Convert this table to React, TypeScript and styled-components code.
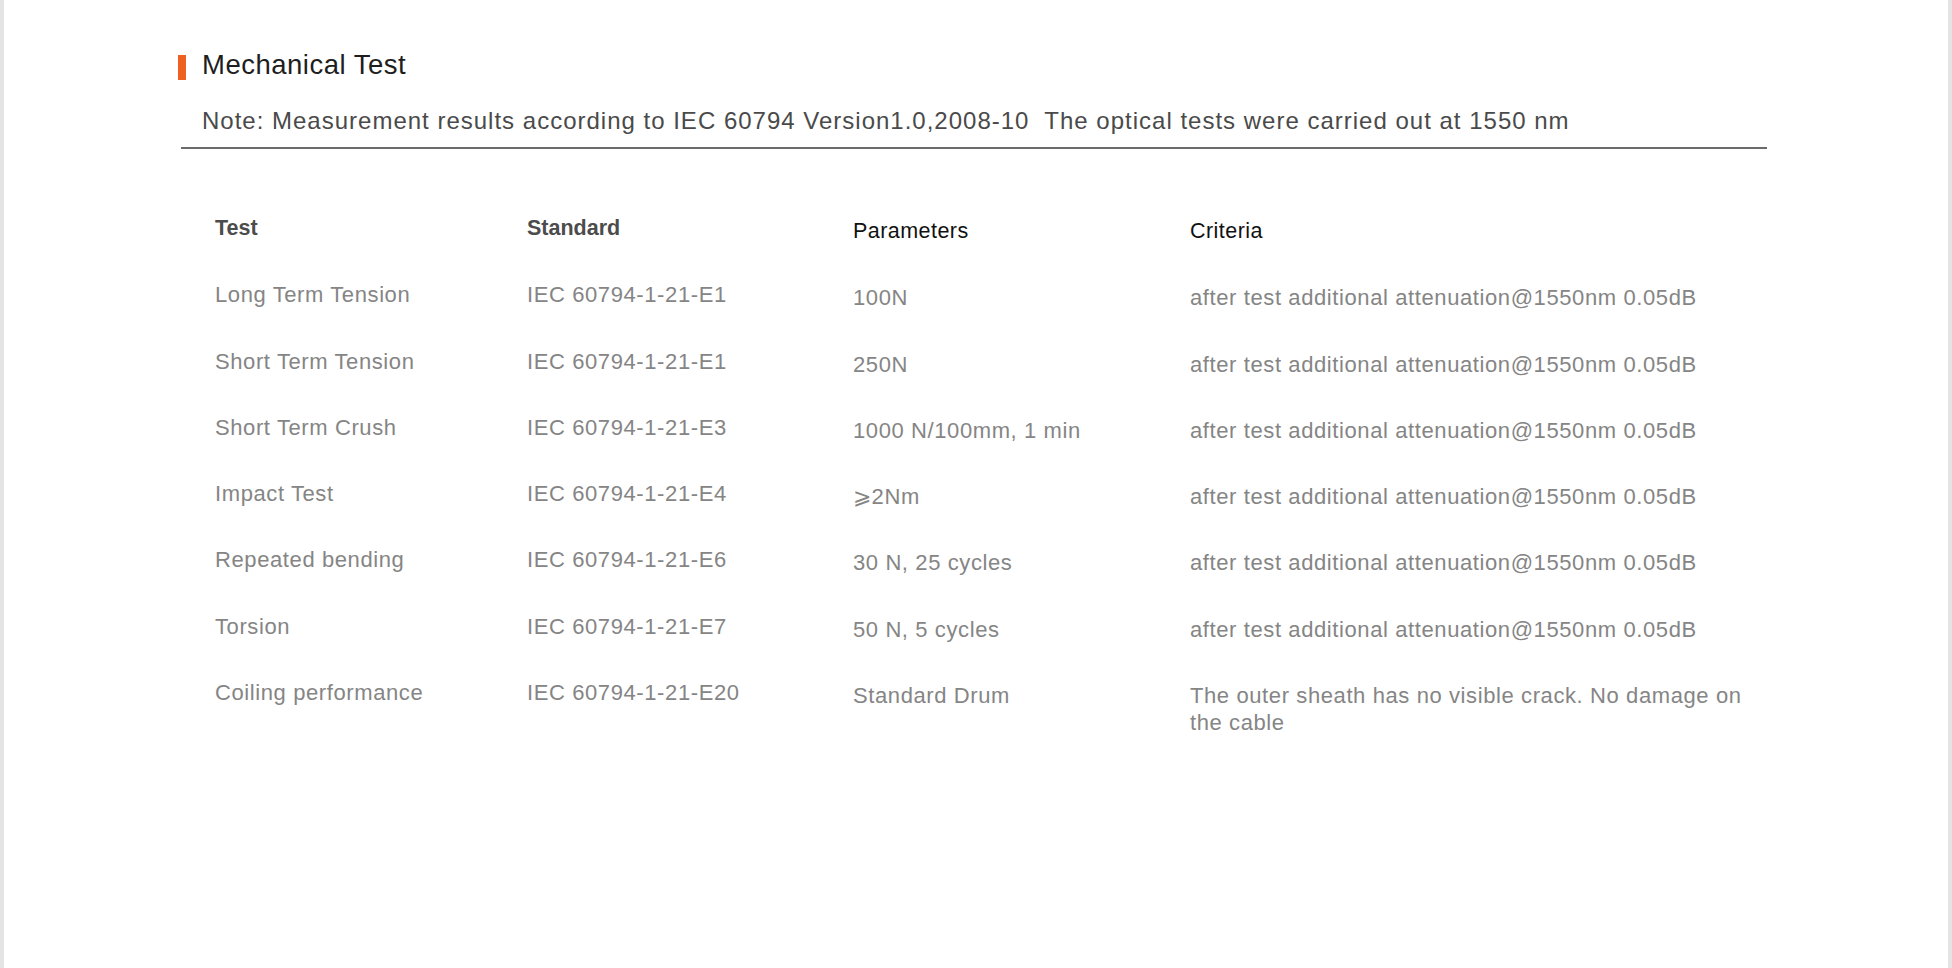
import React from "react";
import styled, { createGlobalStyle } from "styled-components";

const Global = createGlobalStyle`
  html, body { margin: 0; padding: 0; background: #ffffff; }
  body { font-family: "Liberation Sans", Arial, sans-serif; }
`;

const Page = styled.div`
  min-height: 968px;
  box-sizing: border-box;
  border-left: 4px solid #e4e4e4;
  border-right: 4px solid #e4e4e4;
  background: #ffffff;
`;

const Section = styled.section`
  margin-left: 174px;
  width: 1589px;
  padding-top: 55px;
`;

const TitleRow = styled.div`
  display: flex;
  align-items: center;
  gap: 16px;
  height: 25px;
`;

const Accent = styled.span`
  width: 8px;
  height: 25px;
  background: #ee5f22;
  flex: none;
`;

const Title = styled.h2`
  margin: 0;
  padding-bottom: 6px;
  font-size: 27.5px;
  font-weight: 400;
  line-height: 25px;
  letter-spacing: 0.5px;
  color: #1e1e1e;
`;

const Note = styled.p`
  margin: 26px 0 0 3px;
  padding: 0 0 11px 21px;
  font-size: 24px;
  line-height: 30px;
  letter-spacing: 1px;
  color: #4a4a4a;
  white-space: pre;
  border-bottom: 2px solid #6b6b6b;
`;

const Table = styled.div`
  margin-top: 66px;
  margin-left: 37px;
  display: grid;
  grid-template-columns: 312px 326px 337px 560px;
  grid-auto-rows: minmax(66.3px, auto);
`;

const HeadCell = styled.div<{ $strong?: boolean; $shift?: boolean }>`
  font-size: 21.5px;
  line-height: 27px;
  padding-top: ${(p) => (p.$shift ? "3px" : "0")};
  letter-spacing: ${(p) => (p.$strong ? "0" : "0.45px")};
  color: ${(p) => (p.$strong ? "#4c4c4c" : "#111111")};
  font-weight: ${(p) => (p.$strong ? 700 : 400)};
`;

const Cell = styled.div<{ $shift?: boolean }>`
  font-size: 22px;
  line-height: 27px;
  letter-spacing: 0.6px;
  padding-top: ${(p) => (p.$shift ? "3px" : "0")};
  color: #858585;
`;

const rows: [string, string, string, string][] = [
  ["Long Term Tension", "IEC 60794-1-21-E1", "100N", "after test additional attenuation@1550nm 0.05dB"],
  ["Short Term Tension", "IEC 60794-1-21-E1", "250N", "after test additional attenuation@1550nm 0.05dB"],
  ["Short Term Crush", "IEC 60794-1-21-E3", "1000 N/100mm, 1 min", "after test additional attenuation@1550nm 0.05dB"],
  ["Impact Test", "IEC 60794-1-21-E4", "⩾2Nm", "after test additional attenuation@1550nm 0.05dB"],
  ["Repeated bending", "IEC 60794-1-21-E6", "30 N, 25 cycles", "after test additional attenuation@1550nm 0.05dB"],
  ["Torsion", "IEC 60794-1-21-E7", "50 N, 5 cycles", "after test additional attenuation@1550nm 0.05dB"],
  ["Coiling performance", "IEC 60794-1-21-E20", "Standard Drum", "The outer sheath has no visible crack. No damage on the cable"],
];

export default function App() {
  return (
    <Page>
      <Global />
      <Section>
        <TitleRow>
          <Accent />
          <Title>Mechanical Test</Title>
        </TitleRow>
        <Note>{"Note: Measurement results according to IEC 60794 Version1.0,2008-10  The optical tests were carried out at 1550 nm"}</Note>
        <Table>
          <HeadCell $strong>Test</HeadCell>
          <HeadCell $strong>Standard</HeadCell>
          <HeadCell $shift>Parameters</HeadCell>
          <HeadCell $shift>Criteria</HeadCell>
          {rows.map((r) => (
            <React.Fragment key={r[0]}>
              <Cell>{r[0]}</Cell>
              <Cell>{r[1]}</Cell>
              <Cell $shift>{r[2]}</Cell>
              <Cell $shift>{r[3]}</Cell>
            </React.Fragment>
          ))}
        </Table>
      </Section>
    </Page>
  );
}
